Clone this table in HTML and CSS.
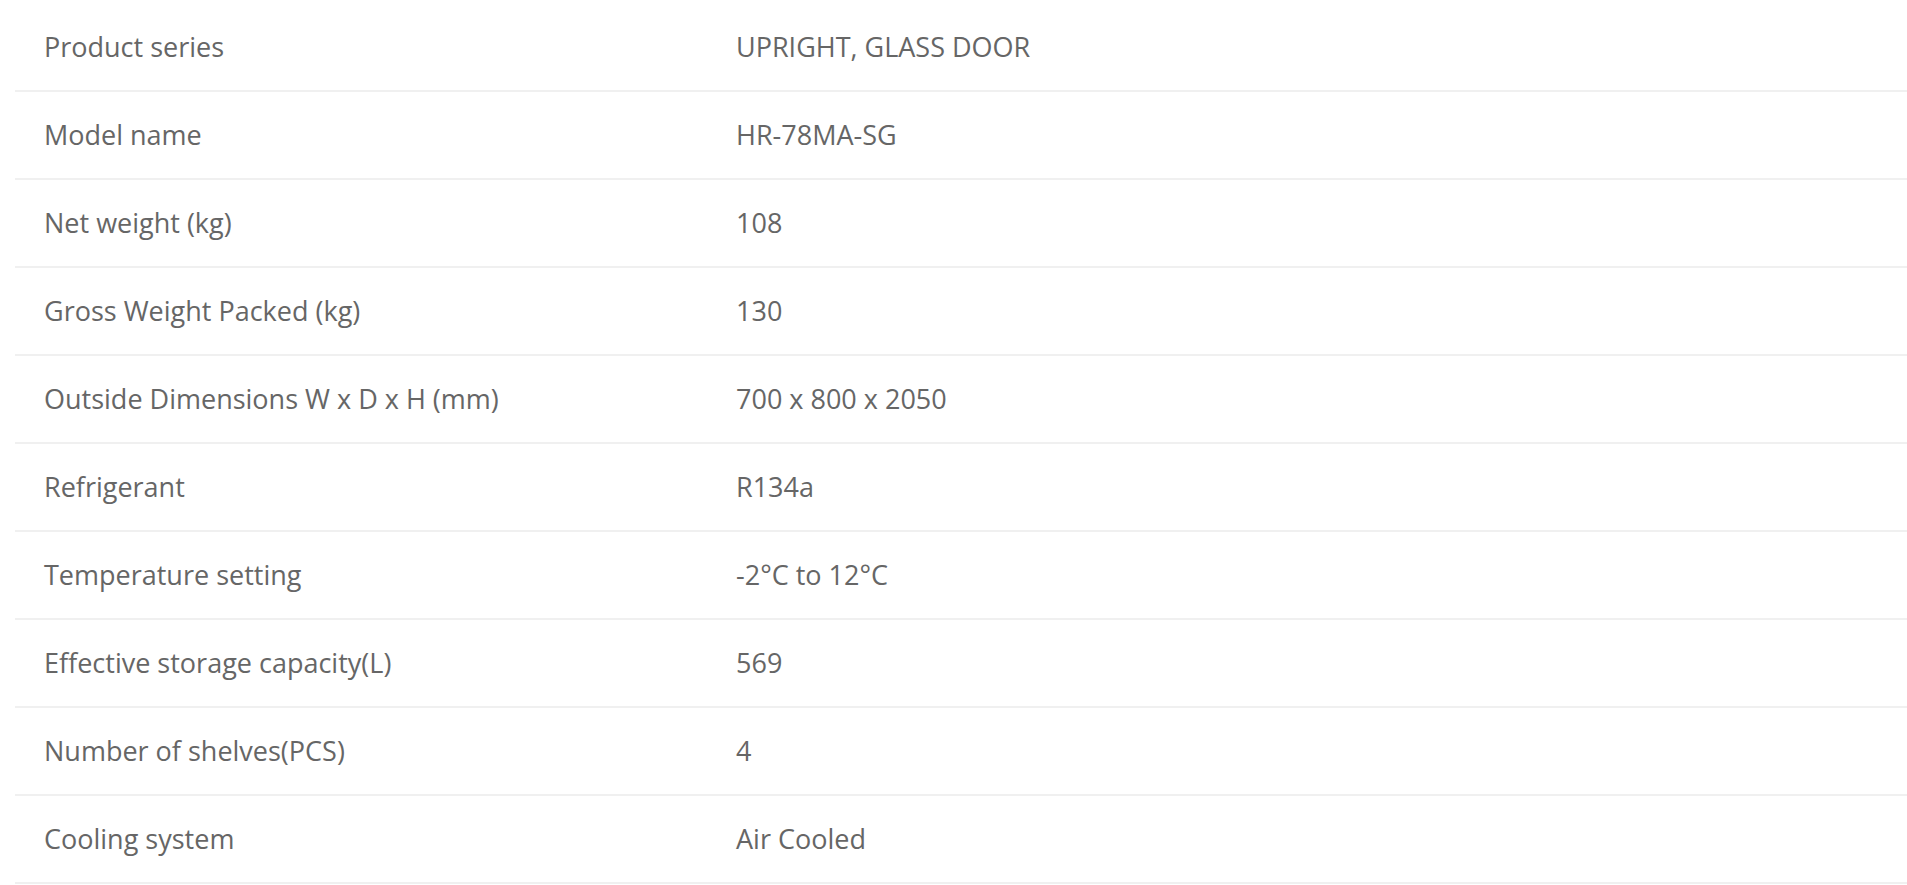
FILE: index.html
```html
<!DOCTYPE html>
<html>
<head>
<meta charset="utf-8">
<link rel="stylesheet" href="styles.css">
</head>
<body>
<div class="wrap">
<table class="spec">
<tbody>
<tr><td class="k">Product series</td><td class="v">UPRIGHT, GLASS DOOR</td></tr>
<tr><td class="k">Model name</td><td class="v">HR-78MA-SG</td></tr>
<tr><td class="k">Net weight (kg)</td><td class="v">108</td></tr>
<tr><td class="k">Gross Weight Packed (kg)</td><td class="v">130</td></tr>
<tr><td class="k">Outside Dimensions W x D x H (mm)</td><td class="v">700 x 800 x 2050</td></tr>
<tr><td class="k">Refrigerant</td><td class="v">R134a</td></tr>
<tr><td class="k">Temperature setting</td><td class="v">-2°C to 12°C</td></tr>
<tr><td class="k">Effective storage capacity(L)</td><td class="v">569</td></tr>
<tr><td class="k">Number of shelves(PCS)</td><td class="v">4</td></tr>
<tr><td class="k">Cooling system</td><td class="v">Air Cooled</td></tr>
</tbody>
</table>
</div>
</body>
</html>
```
FILE: styles.css
```css
html, body {
  margin: 0;
  padding: 0;
  background: #ffffff;
}
body {
  font-family: "Open Sans", "Liberation Sans", sans-serif;
  overflow: hidden;
}
.wrap {
  padding: 4px 0 0 15px;
}
.spec {
  width: 1892px;
  border-collapse: collapse;
  border-spacing: 0;
}
.spec td {
  padding: 24px 0 25px 29px;
  font-size: 27px;
  line-height: 37px;
  color: #666666;
  border-bottom: 2px solid #f0f0f0;
  vertical-align: top;
  white-space: nowrap;
}
.spec td.k {
  width: 663px;
}
```
